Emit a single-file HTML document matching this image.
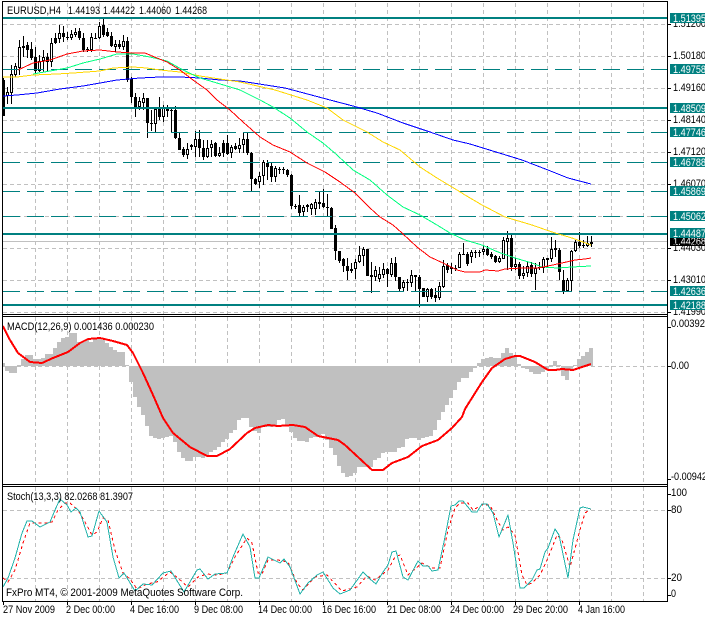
<!DOCTYPE html>
<html><head><meta charset="utf-8"><style>
html,body{margin:0;padding:0;background:#fff;width:705px;height:618px;overflow:hidden}
svg{display:block}
text{font-family:"Liberation Sans",sans-serif;font-size:11px;fill:#000}
.g{stroke:#c0c0c0;stroke-width:1;fill:none;stroke-dasharray:4 3}
.d{stroke:#008080;stroke-width:1;fill:none;stroke-dasharray:17 7}
.m{fill:none;stroke-width:1;stroke-linejoin:round}
.tag{fill:#008080}
.tt{fill:#fff}
</style></head><body>
<svg width="705" height="618" viewBox="0 0 705 618" xmlns="http://www.w3.org/2000/svg" shape-rendering="crispEdges">
<defs>
<clipPath id="c1"><rect x="3" y="2" width="664" height="312"/></clipPath>
<clipPath id="c2"><rect x="3" y="317" width="664" height="167"/></clipPath>
<clipPath id="c3"><rect x="3" y="487" width="664" height="114"/></clipPath>
</defs>
<rect width="705" height="618" fill="#fff"/>

<!-- MAIN PANEL -->
<g clip-path="url(#c1)">
<path class="g" d="M3 24.5H667M3 56.5H667M3 88.5H667M3 120.5H667M3 152.5H667M3 184.5H667M3 216.5H667M3 248.5H667M3 280.5H667M3 312.5H667"/>
<path class="g" d="M35.5 3V314M67.5 3V314M99.5 3V314M131.5 3V314M163.5 3V314M195.5 3V314M227.5 3V314M259.5 3V314M291.5 3V314M323.5 3V314M355.5 3V314M387.5 3V314M419.5 3V314M451.5 3V314M483.5 3V314M515.5 3V314M547.5 3V314M579.5 3V314M611.5 3V314M643.5 3V314"/>
<path d="M3 241.5H667" stroke="#c0c0c0" fill="none"/>

<!-- wicks -->
<path stroke="#000" stroke-width="1" fill="none" d="M3.5 78V116M7.5 87V104M11.5 65V104M15.5 63V77M19.5 40V75M23.5 36V57M27.5 42V58M31.5 42V60M35.5 47V73M39.5 55V72M43.5 50V72M47.5 53V72M51.5 38V67M55.5 33V44M59.5 25V43M63.5 26V42M67.5 32V40M71.5 30V40M75.5 28V37M79.5 28V40M83.5 33V52M87.5 47V52M91.5 33V52M95.5 33V39M99.5 22V39M103.5 18V37M107.5 28V37M111.5 32V47M115.5 40V52M119.5 40V49M123.5 35V50M127.5 37V82M131.5 77V103M135.5 93V117M139.5 97V110M143.5 93V110M147.5 98V138M151.5 110V131M155.5 107V132M159.5 97V120M163.5 105V122M167.5 105V117M171.5 107V132M175.5 106V139M179.5 132V150M183.5 147V157M187.5 143V159M191.5 144V150M195.5 131V157M199.5 130V157M203.5 140V160M207.5 140V158M211.5 140V157M215.5 142V157M219.5 147V157M223.5 140V157M227.5 135V155M231.5 145V158M235.5 143V150M239.5 138V153M243.5 133V153M247.5 132V155M251.5 152V192M255.5 178V185M259.5 172V188M263.5 160V185M267.5 160V180M271.5 163V182M275.5 166V182M279.5 167V174M283.5 167V174M287.5 169V177M291.5 174V209M295.5 204V209M299.5 195V217M303.5 205V217M307.5 204V212M311.5 203V215M315.5 199V215M319.5 192V209M323.5 189V208M327.5 194V217M331.5 207V229M335.5 225V260M339.5 251V263M343.5 258V272M347.5 258V280M351.5 263V273M355.5 259V279M359.5 246V263M363.5 247V266M367.5 249V276M371.5 262V293M375.5 266V281M379.5 267V282M383.5 263V278M387.5 268V287M391.5 258V277M395.5 257V281M399.5 277V292M403.5 280V292M407.5 279V291M411.5 270V287M415.5 275V292M419.5 275V307M423.5 288V297M427.5 288V302M431.5 288V299M435.5 288V302M439.5 282V300M443.5 260V288M447.5 263V273M451.5 263V274M455.5 265V271M459.5 252V268M463.5 243V255M467.5 252V266M471.5 250V263M475.5 250V258M479.5 250V257M483.5 245V255M487.5 246V256M491.5 252V259M495.5 255V263M499.5 256V263M503.5 237V259M507.5 231V270M511.5 235V271M515.5 258V270M519.5 262V279M523.5 266V279M527.5 262V277M531.5 262V277M535.5 263V290M539.5 262V270M543.5 257V273M547.5 258V268M551.5 237V262M555.5 240V257M559.5 248V280M563.5 270V294M567.5 278V291M571.5 250V291M575.5 240V252M579.5 232V248M583.5 240V248M587.5 236V247M591.5 236V247"/>
<!-- bodies -->
<path stroke="#000" stroke-width="3" fill="none" d="M3.5 80V116M7.5 92V96M11.5 74V93M15.5 66V75M19.5 47V68M23.5 46V48M27.5 45V50M31.5 49V58M35.5 57V71M39.5 61V71M43.5 57V61M47.5 57V62M51.5 43V62M55.5 38V43M59.5 33V39M63.5 33V37M67.5 37V38M71.5 34V38M75.5 32V35M79.5 31V38M83.5 38V50M87.5 49V50M91.5 37V50M95.5 38V39M99.5 26V38M103.5 25V35M107.5 32V36M111.5 36V46M115.5 44V47M119.5 44V47M123.5 41V47M127.5 41V80M131.5 79V97M135.5 97V107M139.5 101V107M143.5 98V103M147.5 98V123M151.5 123V124M155.5 109V124M159.5 109V117M163.5 108V117M167.5 109V111M171.5 110V111M175.5 110V138M179.5 138V150M183.5 149V155M187.5 149V155M191.5 145V147M195.5 139V147M199.5 139V148M203.5 148V157M207.5 148V157M211.5 144V148M215.5 143V156M219.5 153V156M223.5 143V153M227.5 143V154M231.5 147V153M235.5 146V149M239.5 145V149M243.5 139V145M247.5 139V153M251.5 153V179M255.5 179V184M259.5 176V182M263.5 162V176M267.5 163V167M271.5 166V177M275.5 168V177M279.5 169V170M283.5 169V170M287.5 170V175M291.5 175V206M295.5 206V207M299.5 205V213M303.5 207V212M307.5 205V207M311.5 204V209M315.5 202V209M319.5 202V204M323.5 203V207M327.5 207V208M331.5 208V229M335.5 228V251M339.5 251V261M343.5 259V266M347.5 266V271M351.5 269V271M355.5 262V269M359.5 255V262M363.5 249V256M367.5 249V276M371.5 275V277M375.5 270V277M379.5 274V279M383.5 269V275M387.5 269V274M391.5 263V275M395.5 263V277M399.5 277V289M403.5 282V288M407.5 282V283M411.5 275V283M415.5 275V277M419.5 277V289M423.5 288V297M427.5 289V297M431.5 289V297M435.5 295V298M439.5 286V298M443.5 266V287M447.5 265V270M451.5 267V269M455.5 268V269M459.5 254V268M463.5 254V255M467.5 254V264M471.5 252V257M475.5 252V253M479.5 252V253M483.5 249V252M487.5 249V255M491.5 254V257M495.5 256V262M499.5 258V262M503.5 240V259M507.5 238V242M511.5 238V267M515.5 264V267M519.5 264V276M523.5 273V276M527.5 266V273M531.5 265V274M535.5 268V274M539.5 267V268M543.5 259V268M547.5 258V260M551.5 249V259M555.5 248V250M559.5 250V272M563.5 280V291M567.5 280V291M571.5 251V281M575.5 242V251M579.5 242V246M583.5 245V246M587.5 243V246M591.5 242V244"/>
<!-- white interiors -->
<path stroke="#fff" stroke-width="1" fill="none" d="M7.5 93V95M11.5 75V92M15.5 67V74M19.5 48V67M39.5 62V70M43.5 58V60M51.5 44V61M59.5 34V38M71.5 35V37M75.5 33V34M91.5 38V49M99.5 27V37M115.5 45V46M123.5 42V46M139.5 102V106M143.5 99V102M155.5 110V123M163.5 109V116M187.5 150V154M195.5 140V146M207.5 149V156M211.5 145V147M219.5 154V155M231.5 148V152M239.5 146V148M243.5 140V144M259.5 177V181M263.5 163V175M275.5 169V176M303.5 208V211M311.5 205V208M315.5 203V208M355.5 263V268M359.5 256V261M363.5 250V255M375.5 271V276M379.5 275V278M383.5 270V274M391.5 264V274M403.5 283V287M411.5 276V282M427.5 290V296M439.5 287V297M443.5 267V286M459.5 255V267M471.5 253V256M483.5 250V251M499.5 259V261M503.5 241V258M507.5 239V241M515.5 265V266M523.5 274V275M527.5 267V272M535.5 269V273M543.5 260V267M551.5 250V258M567.5 281V290M571.5 252V280M575.5 243V250M587.5 244V245"/>

<!-- horizontal teal levels -->
<path class="d" d="M3 69.5H667M3 132.5H667M3 162.5H667M3 191.5H667M3 216.5H667M3 291.5H667"/>
<path stroke="#008080" stroke-width="2" fill="none" d="M3 18H667M3 108H667M3 234H667M3 305H667"/>

<!-- moving averages -->
<polyline class="m" stroke="#0000ff" points="3,96 17,95 37,93 60,89 83,86 100,83 117,80 140,78 160,77 180,77 200,78 220,80 240,81 285,88 330,100 353,106 377,113 403,123 430,132 453,140 470,144 522,160 548,170 568,178 591,184"/>
<polyline class="m" stroke="#ffd700" points="3,77 17,77 33,75 57,74 73,73 100,71 113,68 133,67 147,68 160,70 180,72 200,76 220,79 240,82 275,90 307,100 327,108 343,120 367,132 383,142 400,150 420,167 437,178 457,190 465,195 482,205 505,217 532,225 552,232 572,238 591,245"/>
<polyline class="m" stroke="#00ff7f" points="33,74 50,71 67,68 83,63 100,59 117,54 133,54 150,57 167,61 183,70 200,78 217,83 240,90 260,100 273,107 290,118 307,132 323,143 337,155 353,170 370,180 387,195 403,207 420,215 437,225 450,233 465,240 482,245 498,252 515,258 532,263 542,267 558,268 572,267 591,266"/>
<polyline class="m" stroke="#ff0000" points="18,70 33,63 50,60 67,54 83,51 100,50 117,52 133,53 145,53 157,58 167,62 180,70 193,80 207,90 217,100 230,110 243,122 260,137 273,145 290,152 307,163 325,172 340,182 355,193 370,208 380,217 393,225 402,233 417,247 430,257 443,263 457,270 465,272 480,272 485,270 498,271 505,269 522,268 538,268 548,266 562,263 575,260 585,259 591,258"/>
</g>

<!-- MACD PANEL -->
<g clip-path="url(#c2)">
<path class="g" d="M3 366.5H667"/>
<path class="g" d="M35.5 317V484M67.5 317V484M99.5 317V484M131.5 317V484M163.5 317V484M195.5 317V484M227.5 317V484M259.5 317V484M291.5 317V484M323.5 317V484M355.5 317V484M387.5 317V484M419.5 317V484M451.5 317V484M483.5 317V484M515.5 317V484M547.5 317V484M579.5 317V484M611.5 317V484M643.5 317V484"/>
<path fill="#c0c0c0" d="M2 366V363H5V371H9V373H13V373H17V365H21V359H25V355H29V355H33V359H37V359H41V358H45V354H49V354H53V348H57V342H61V338H65V337H69V333H73V333H77V342H81V342H85V340H89V342H93V338H97V338H101V340H105V343H109V347H113V350H117V352H121V352H125V365H129V382H133V397H137V407H141V415H145V426H149V436H153V438H157V439H161V438H165V437H169V436H173V442H177V452H181V458H185V461H189V461H193V457H197V457H201V458H205V455H209V452H213V450H217V447H221V442H225V439H229V433H233V430H237V420H241V418H245V418H249V427H253V431H257V433H261V427H265V427H269V427H273V425H277V420H281V419H285V425H289V432H293V438H297V441H301V441H305V442H309V438H313V437H317V435H321V434H325V440H329V448H333V455H337V466H341V473H345V477H349V476H353V473H357V467H361V467H365V467H369V467H373V460H377V458H381V453H385V452H389V452H393V452H397V448H401V447H405V439H409V438H413V438H417V440H421V438H425V437H429V436H433V430H437V420H441V412H445V405H449V398H453V390H457V382H461V378H465V378H469V372H473V368H477V363H481V359H485V358H489V357H493V358H497V358H501V353H505V348H509V353H513V356H517V364H521V368H525V369H529V372H533V374H537V374H541V372H545V369H549V365H553V361H557V365H561V376H565V380H569V370H573V365H577V359H581V356H585V352H589V348H593V366Z"/>
<polyline fill="none" stroke="#ff0000" stroke-width="2" stroke-linejoin="round" points="3,326 10,340 18,353 30,362 42,363 53,358 68,352 80,343 88,339 100,338 113,341 127,345 133,353 143,373 153,395 163,418 173,433 190,447 207,456 217,456 230,449 247,433 255,428 268,425 278,426 293,425 305,427 318,436 338,440 345,445 372,470 383,470 392,463 408,457 422,446 438,440 452,428 462,417 465,409 482,382 492,368 505,359 515,356 520,356 535,362 548,370 555,370 562,369 573,370 582,367 591,364"/>
</g>

<!-- STOCH PANEL -->
<g clip-path="url(#c3)">
<path class="g" d="M3 510.5H667M3 578.5H667"/>
<path class="g" d="M35.5 487V601M67.5 487V601M99.5 487V601M131.5 487V601M163.5 487V601M195.5 487V601M227.5 487V601M259.5 487V601M291.5 487V601M323.5 487V601M355.5 487V601M387.5 487V601M419.5 487V601M451.5 487V601M483.5 487V601M515.5 487V601M547.5 487V601M579.5 487V601M611.5 487V601M643.5 487V601"/>
<polyline fill="none" stroke="#ff0000" stroke-width="1" stroke-dasharray="3 3" points="3,578 8,582 15,570 23,543 30,523 38,523 47,523 52,522 58,510 65,503 70,503 78,510 85,522 92,535 97,532 103,518 108,520 115,550 123,573 130,579 137,589 147,584 157,582 170,572 178,578 188,587 198,577 207,574 217,575 227,573 235,557 247,538 252,543 258,573 262,574 268,560 278,560 288,562 297,583 303,590 315,577 327,575 342,591 357,587 367,576 375,580 388,570 395,557 400,555 408,575 422,563 432,568 440,568 448,530 455,508 460,503 468,503 473,510 482,505 490,505 498,522 503,530 508,527 515,535 522,575 527,585 532,583 540,575 548,558 557,535 562,540 570,567 580,530 585,513 591,509"/>
<polyline fill="none" stroke="#20b2aa" stroke-width="1" stroke-linejoin="round" points="3,587 8,578 15,558 22,533 27,521 32,521 40,527 50,522 55,510 60,499 67,505 71,512 76,508 80,512 88,537 92,536 99,511 107,522 113,557 119,578 124,573 135,591 143,584 152,585 163,573 171,571 184,592 197,570 200,569 208,579 215,574 227,573 233,557 243,534 250,547 255,578 259,578 268,557 280,563 284,559 290,567 300,594 308,583 317,575 323,572 333,588 340,594 350,590 363,572 370,579 376,584 383,572 388,565 392,552 396,551 403,577 408,580 418,561 423,566 428,566 432,571 438,570 445,537 451,506 455,505 459,501 463,501 472,512 477,512 482,504 487,504 493,513 499,537 508,515 513,543 520,588 524,588 532,580 537,570 540,569 545,552 548,548 555,529 559,535 568,578 573,540 580,508 583,507 591,509"/>
</g>

<!-- Frames -->
<path stroke="#000" stroke-width="1" fill="none" d="M2.5 1V602M667.5 1V602M2 1.5H668M2 314.5H668M2 316.5H668M2 484.5H668M2 486.5H668M2 601.5H668"/>
<!-- ticks -->
<path stroke="#000" stroke-width="1" fill="none" d="M668 24.5H671M668 56.5H671M668 88.5H671M668 120.5H671M668 152.5H671M668 184.5H671M668 248.5H671M668 280.5H671M668 312.5H671M668 327.5H671M668 366.5H671M668 479.5H671M668 494.5H671M668 510.5H671M668 578.5H671M668 595.5H671M3.5 602V605M67.5 602V605M131.5 602V605M195.5 602V605M259.5 602V605M323.5 602V605M387.5 602V605M451.5 602V605M515.5 602V605M579.5 602V605"/>

<!-- chart labels -->
<text x="7" y="14" textLength="54" lengthAdjust="spacingAndGlyphs">EURUSD,H4</text>
<text x="68" y="14" textLength="32" lengthAdjust="spacingAndGlyphs">1.44193</text>
<text x="103" y="14" textLength="32" lengthAdjust="spacingAndGlyphs">1.44422</text>
<text x="139" y="14" textLength="32" lengthAdjust="spacingAndGlyphs">1.44060</text>
<text x="175" y="14" textLength="32" lengthAdjust="spacingAndGlyphs">1.44268</text>
<text x="7" y="330" textLength="147" lengthAdjust="spacingAndGlyphs">MACD(12,26,9) 0.001436 0.000230</text>
<text x="7" y="500" textLength="126" lengthAdjust="spacingAndGlyphs">Stoch(13,3,3) 82.0268 81.3907</text>
<text x="6" y="596" textLength="237" lengthAdjust="spacingAndGlyphs">FxPro MT4, © 2001-2009 MetaQuotes Software Corp.</text>

<!-- right axis -->
<text x="673" y="27" textLength="33" lengthAdjust="spacingAndGlyphs">1.51200</text>
<text x="673" y="59" textLength="33" lengthAdjust="spacingAndGlyphs">1.50180</text>
<text x="673" y="91" textLength="33" lengthAdjust="spacingAndGlyphs">1.49160</text>
<text x="673" y="123" textLength="33" lengthAdjust="spacingAndGlyphs">1.48140</text>
<text x="673" y="155" textLength="33" lengthAdjust="spacingAndGlyphs">1.47120</text>
<text x="673" y="187" textLength="33" lengthAdjust="spacingAndGlyphs">1.46070</text>
<text x="673" y="283" textLength="33" lengthAdjust="spacingAndGlyphs">1.43010</text>
<text x="673" y="315" textLength="33" lengthAdjust="spacingAndGlyphs">1.41990</text>

<rect x="670" y="236" width="35" height="10" fill="#000"/>
<text class="tt" x="673" y="245" textLength="33" lengthAdjust="spacingAndGlyphs">1.44268</text>
<text x="673" y="251" textLength="33" lengthAdjust="spacingAndGlyphs">1.44030</text>

<rect class="tag" x="670" y="13" width="35" height="10"/><text class="tt" x="673" y="22" textLength="33" lengthAdjust="spacingAndGlyphs">1.51395</text>
<rect class="tag" x="670" y="64" width="35" height="10"/><text class="tt" x="673" y="73" textLength="33" lengthAdjust="spacingAndGlyphs">1.49758</text>
<rect class="tag" x="670" y="103" width="35" height="10"/><text class="tt" x="673" y="112" textLength="33" lengthAdjust="spacingAndGlyphs">1.48509</text>
<rect class="tag" x="670" y="127" width="35" height="10"/><text class="tt" x="673" y="136" textLength="33" lengthAdjust="spacingAndGlyphs">1.47746</text>
<rect class="tag" x="670" y="157" width="35" height="10"/><text class="tt" x="673" y="166" textLength="33" lengthAdjust="spacingAndGlyphs">1.46788</text>
<rect class="tag" x="670" y="186" width="35" height="10"/><text class="tt" x="673" y="195" textLength="33" lengthAdjust="spacingAndGlyphs">1.45869</text>
<rect class="tag" x="670" y="211" width="35" height="10"/><text class="tt" x="673" y="220" textLength="33" lengthAdjust="spacingAndGlyphs">1.45062</text>
<rect class="tag" x="670" y="228" width="35" height="10"/><text class="tt" x="673" y="237" textLength="33" lengthAdjust="spacingAndGlyphs">1.44487</text>
<rect class="tag" x="670" y="286" width="35" height="10"/><text class="tt" x="673" y="295" textLength="33" lengthAdjust="spacingAndGlyphs">1.42636</text>
<rect class="tag" x="670" y="300" width="35" height="10"/><text class="tt" x="673" y="309" textLength="33" lengthAdjust="spacingAndGlyphs">1.42188</text>

<text x="671" y="327" textLength="34" lengthAdjust="spacingAndGlyphs">0.00392</text>
<text x="671" y="369" textLength="18" lengthAdjust="spacingAndGlyphs">0.00</text>
<text x="671" y="480" textLength="36" lengthAdjust="spacingAndGlyphs">-0.00942</text>
<text x="671" y="496" textLength="16" lengthAdjust="spacingAndGlyphs">100</text>
<text x="671" y="513" textLength="11" lengthAdjust="spacingAndGlyphs">80</text>
<text x="671" y="581" textLength="11" lengthAdjust="spacingAndGlyphs">20</text>
<text x="671" y="597" textLength="5" lengthAdjust="spacingAndGlyphs">0</text>

<!-- time axis -->
<text x="3" y="613" textLength="52" lengthAdjust="spacingAndGlyphs">27 Nov 2009</text>
<text x="66" y="613" textLength="49" lengthAdjust="spacingAndGlyphs">2 Dec 00:00</text>
<text x="130" y="613" textLength="49" lengthAdjust="spacingAndGlyphs">4 Dec 16:00</text>
<text x="194" y="613" textLength="49" lengthAdjust="spacingAndGlyphs">9 Dec 08:00</text>
<text x="258" y="613" textLength="54" lengthAdjust="spacingAndGlyphs">14 Dec 00:00</text>
<text x="322" y="613" textLength="54" lengthAdjust="spacingAndGlyphs">16 Dec 16:00</text>
<text x="387" y="613" textLength="54" lengthAdjust="spacingAndGlyphs">21 Dec 08:00</text>
<text x="450" y="613" textLength="54" lengthAdjust="spacingAndGlyphs">24 Dec 00:00</text>
<text x="513" y="613" textLength="55" lengthAdjust="spacingAndGlyphs">29 Dec 20:00</text>
<text x="578" y="613" textLength="47" lengthAdjust="spacingAndGlyphs">4 Jan 16:00</text>
</svg>
</body></html>
